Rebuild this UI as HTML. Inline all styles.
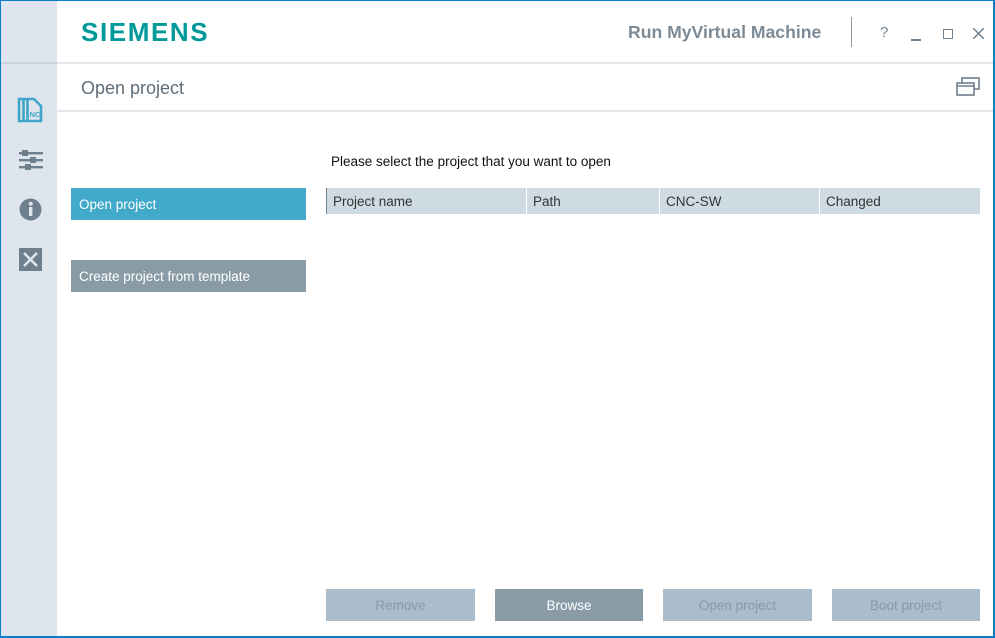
<!DOCTYPE html>
<html><head><meta charset="utf-8"><style>
*{margin:0;padding:0;box-sizing:border-box}
body{width:995px;height:638px;overflow:hidden;background:#0a7fd0;font-family:"Liberation Sans",sans-serif;position:relative}
#win{position:absolute;left:1px;top:1px;width:992px;height:635px;background:#fff;overflow:hidden}
#side{position:absolute;left:0;top:0;width:56px;height:635px;background:#dfe5ec}
#side .ln{position:absolute;left:0;top:61px;width:56px;height:2px;background:#c9d2dc}
.hl{position:absolute;left:56px;width:936px;height:2px;background:#e2e7ee}
.t{position:absolute;white-space:nowrap}
.btn{position:absolute;height:32px;color:#fff;font-size:13.5px;line-height:34px}
.bb{position:absolute;top:588px;width:149px;height:32px;text-align:center;line-height:34px;font-size:13.5px;background:#abbdca;color:#889aa8}
.th{position:absolute;top:187px;height:26px;background:#cfdbe3;font-size:13.5px;line-height:28px;padding-left:6px;color:#333}
</style></head><body>
<div id="win">
<div id="side"><div class="ln"></div>
<svg style="position:absolute;left:16px;top:96px" width="26" height="26" viewBox="0 0 26 26"><g fill="none" stroke="#3ea7c9" stroke-width="2.6"><path d="M2 2h15l7 7v15H2z"/><path d="M6.5 2v22M10.5 2v22"/></g><text x="12.5" y="20" font-size="7.5" font-weight="bold" fill="#3ea7c9" font-family="Liberation Sans">NC</text></svg>
<svg style="position:absolute;left:18px;top:148px" width="24" height="22" viewBox="0 0 24 22"><g fill="#6e7f8d"><rect x="0" y="3" width="24" height="2.4"/><rect x="0" y="10" width="24" height="2.4"/><rect x="0" y="17" width="24" height="2.4"/><rect x="3" y="1" width="6" height="6"/><rect x="11" y="8" width="6" height="6"/><rect x="6" y="15" width="6" height="6"/></g></svg>
<svg style="position:absolute;left:18px;top:197px" width="23" height="23" viewBox="0 0 23 23"><circle cx="11.5" cy="11.5" r="11" fill="#6e7f8d"/><rect x="10" y="9" width="3.4" height="9" fill="#dfe5ec"/><circle cx="11.7" cy="5.8" r="2" fill="#dfe5ec"/></svg>
<svg style="position:absolute;left:18px;top:247px" width="23" height="23" viewBox="0 0 23 23"><rect width="23" height="23" fill="#6e7f8d"/><path d="M5 5l13 13M18 5L5 18" stroke="#dfe5ec" stroke-width="2.5"/></svg>
</div>
<div class="t" style="left:80px;top:16px;font-size:26px;font-weight:bold;color:#009999;letter-spacing:1.6px">SIEMENS</div>
<div class="t" style="left:627px;top:21px;font-size:17.6px;font-weight:bold;color:#7c8a96">Run MyVirtual Machine</div>
<div style="position:absolute;left:850px;top:16px;width:1px;height:30px;background:#8a959e"></div>
<div class="t" style="left:879px;top:23px;font-size:15px;color:#6e7f8d">?</div>
<div style="position:absolute;left:910px;top:38px;width:10px;height:1.5px;background:#6e7f8d"></div>
<div style="position:absolute;left:942px;top:28px;width:10px;height:10px;border:1.5px solid #6e7f8d"></div>
<svg style="position:absolute;left:972px;top:27px" width="11" height="11"><path d="M0 0L11 11M11 0L0 11" stroke="#6e7f8d" stroke-width="1.5"/></svg>
<div class="hl" style="top:61px"></div>
<div class="t" style="left:80px;top:77px;font-size:18px;color:#5f6d79">Open project</div>
<svg style="position:absolute;left:955px;top:76px" width="24" height="20" viewBox="0 0 24 20"><g fill="#fff" stroke="#6e7f8d" stroke-width="1.6"><rect x="6" y="1" width="17" height="11"/><rect x="1" y="6" width="17" height="12"/><path d="M1 9h17"/></g></svg>
<div class="hl" style="top:109px"></div>
<div class="t" style="left:330px;top:153px;font-size:13.5px;color:#111">Please select the project that you want to open</div>
<div class="btn" style="left:70px;top:187px;width:235px;background:#41a9c9;padding-left:8px">Open project</div>
<div class="btn" style="left:70px;top:259px;width:235px;background:#8a9ba8;padding-left:8px">Create project from template</div>
<div style="position:absolute;left:325px;top:187px;width:1px;height:26px;background:#6e7f8d"></div>
<div class="th" style="left:326px;width:199px">Project name</div>
<div class="th" style="left:526px;width:132px">Path</div>
<div class="th" style="left:659px;width:159px">CNC-SW</div>
<div class="th" style="left:819px;width:160px">Changed</div>
<div class="bb" style="left:325px">Remove</div>
<div class="bb" style="left:494px;width:148px;background:#8a9ba8;color:#fff">Browse</div>
<div class="bb" style="left:662px">Open project</div>
<div class="bb" style="left:831px;width:148px">Boot project</div>
</div>
</body></html>
